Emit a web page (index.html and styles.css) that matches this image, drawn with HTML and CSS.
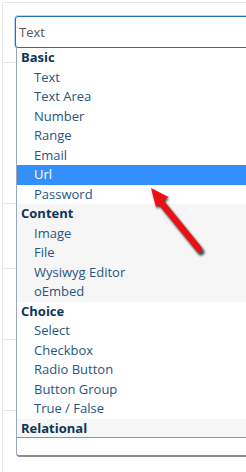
FILE: index.html
```html
<!DOCTYPE html>
<html lang="en">
<head>
    <meta charset="UTF-8">
    <title>Field Type</title>
    <link rel="stylesheet" href="styles.css">
</head>
<body>
    <div class="page">
        <!-- table behind the dropdown -->
        <div class="sheet">
            <div class="row r1"></div>
            <div class="row r2"></div>
            <div class="row r3"></div>
            <div class="row r4"></div>
            <div class="row r5"></div>
        </div>

        <div class="dropdown">
            <div class="select-box">Text</div>
            <div class="list">
                <div class="results">
                    <div class="group">
                        <div class="group-label">Basic</div>
                        <div class="option">Text</div>
                        <div class="option">Text Area</div>
                        <div class="option">Number</div>
                        <div class="option">Range</div>
                        <div class="option">Email</div>
                        <div class="option active">Url</div>
                        <div class="option">Password</div>
                    </div>
                    <div class="group alt">
                        <div class="group-label">Content</div>
                        <div class="option">Image</div>
                        <div class="option">File</div>
                        <div class="option">Wysiwyg Editor</div>
                        <div class="option">oEmbed</div>
                    </div>
                    <div class="group">
                        <div class="group-label">Choice</div>
                        <div class="option">Select</div>
                        <div class="option">Checkbox</div>
                        <div class="option">Radio Button</div>
                        <div class="option">Button Group</div>
                        <div class="option">True / False</div>
                    </div>
                    <div class="group alt">
                        <div class="group-label">Relational</div>
                    </div>
                </div>
                <div class="list-foot"></div>
            </div>
        </div>

        <svg class="arrow" width="246" height="472" viewBox="0 0 246 472">
            <g class="arrow-shadow">
                <line x1="162" y1="204" x2="201" y2="252"></line>
                <polygon points="152,190 169,199 157,209"></polygon>
            </g>
            <g class="arrow-body">
                <line x1="160" y1="201" x2="199" y2="249"></line>
                <polygon points="151,188 168.5,197 156,207"></polygon>
            </g>
        </svg>
    </div>
</body>
</html>
```

FILE: styles.css
```css
* {
    margin: 0;
    padding: 0;
    box-sizing: border-box;
}

body {
    font-family: "Open Sans", "Noto Sans", sans-serif;
    font-size: 13px;
    background: #fff;
    overflow: hidden;
}

.page {
    position: relative;
    width: 246px;
    height: 472px;
    overflow: hidden;
}

.sheet {
    margin: 2px 0 0 2px;
    height: 470px;
    border-top: 1px solid #e8e8e8;
    border-left: 1px solid #e8e8e8;
}

.row {
    border-bottom: 1px solid #e8e8e8;
}

.r1 { height: 60px; }
.r2 { height: 141px; }
.r3 { height: 65px; }
.r4 { height: 71px; }
.r5 { height: 71px; }

.dropdown {
    position: absolute;
    left: 15px;
    top: 16px;
    width: 320px;
}

.select-box {
    height: 32px;
    line-height: 30px;
    padding-left: 3px;
    border: 1px solid #2271b1;
    border-radius: 3px;
    box-shadow: 0 0 0 1px rgba(120, 175, 225, 0.5);
    color: #555;
    background: #fff;
}

.list {
    margin-left: 1px;
    border-left: 1px solid #9aa7b8;
    border-bottom: 2px solid #8c8c8c;
    border-bottom-left-radius: 4px;
    background: #fff;
}

.results {
    height: 390px;
    overflow: hidden;
    border-bottom: 1px solid #6f98d6;
}

.list-foot {
    height: 17px;
}

.group {
    background: #fff;
}

.group.alt {
    background: #f6f6f6;
}

.group-label {
    height: 19.5px;
    line-height: 19.5px;
    padding-left: 4px;
    font-weight: 700;
    color: #0d3657;
}

.option {
    height: 19.5px;
    line-height: 19.5px;
    padding-left: 17px;
    color: #27557f;
}

.option.active {
    background: #3390fb;
    color: #fff;
}

.arrow {
    position: absolute;
    left: 0;
    top: 0;
}

.arrow-shadow line {
    stroke: rgba(20, 20, 20, 0.75);
    stroke-width: 7;
    stroke-linecap: round;
}

.arrow-shadow polygon {
    fill: rgba(20, 20, 20, 0.75);
}

.arrow-shadow {
    filter: blur(1px);
}

.arrow-body line {
    stroke: #ec0f14;
    stroke-width: 6;
    stroke-linecap: round;
}

.arrow-body polygon {
    fill: #ec0f14;
}
```
